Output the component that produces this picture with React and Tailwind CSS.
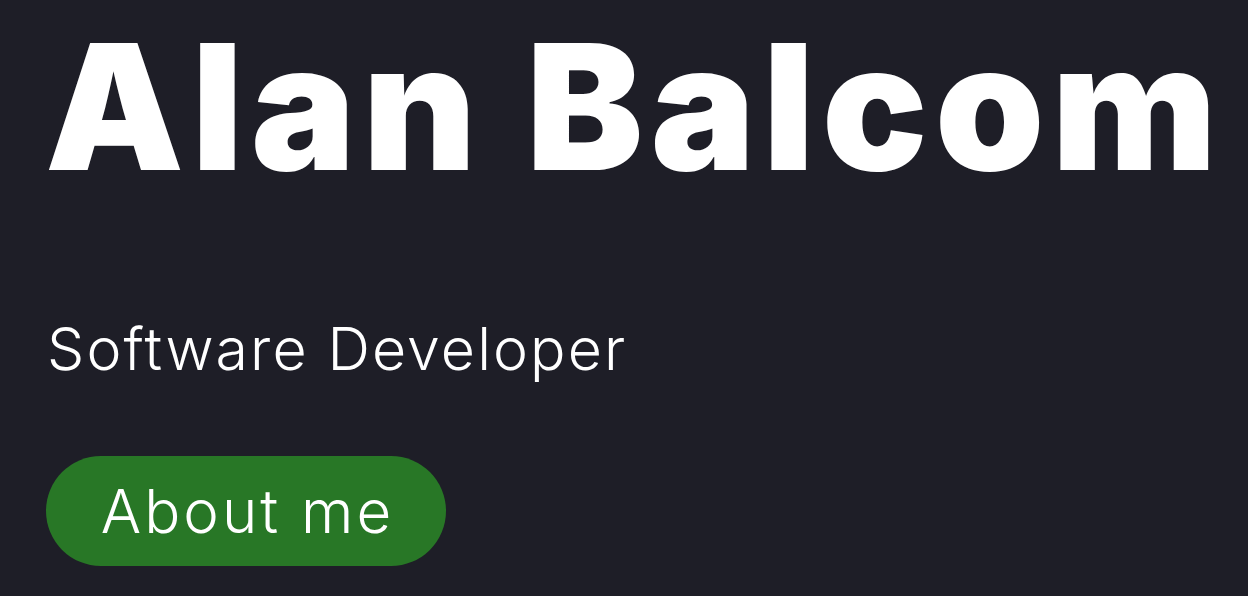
import React from 'react'

const App = () => {
  return (
    <div className="min-h-screen w-full bg-[#1e1e27] text-white font-['Inter',sans-serif] overflow-hidden">
      <div className="flex flex-col items-start px-[48px] pt-[19px]">
        <h1 className="-ml-[3px] text-[175px] leading-none font-black tracking-[7.5px] whitespace-nowrap">
          Alan Balcom
        </h1>
        <p className="mt-[125px] -ml-[1px] text-[59px] leading-none font-light tracking-[2.1px] whitespace-nowrap">
          Software Developer
        </p>
        <button className="mt-[78px] -ml-[2px] w-[400px] h-[110px] rounded-full bg-[#287726] flex items-center justify-center pl-[3px] text-[60px] font-light leading-none tracking-[3px]">
          About me
        </button>
      </div>
    </div>
  )
}

export default App
